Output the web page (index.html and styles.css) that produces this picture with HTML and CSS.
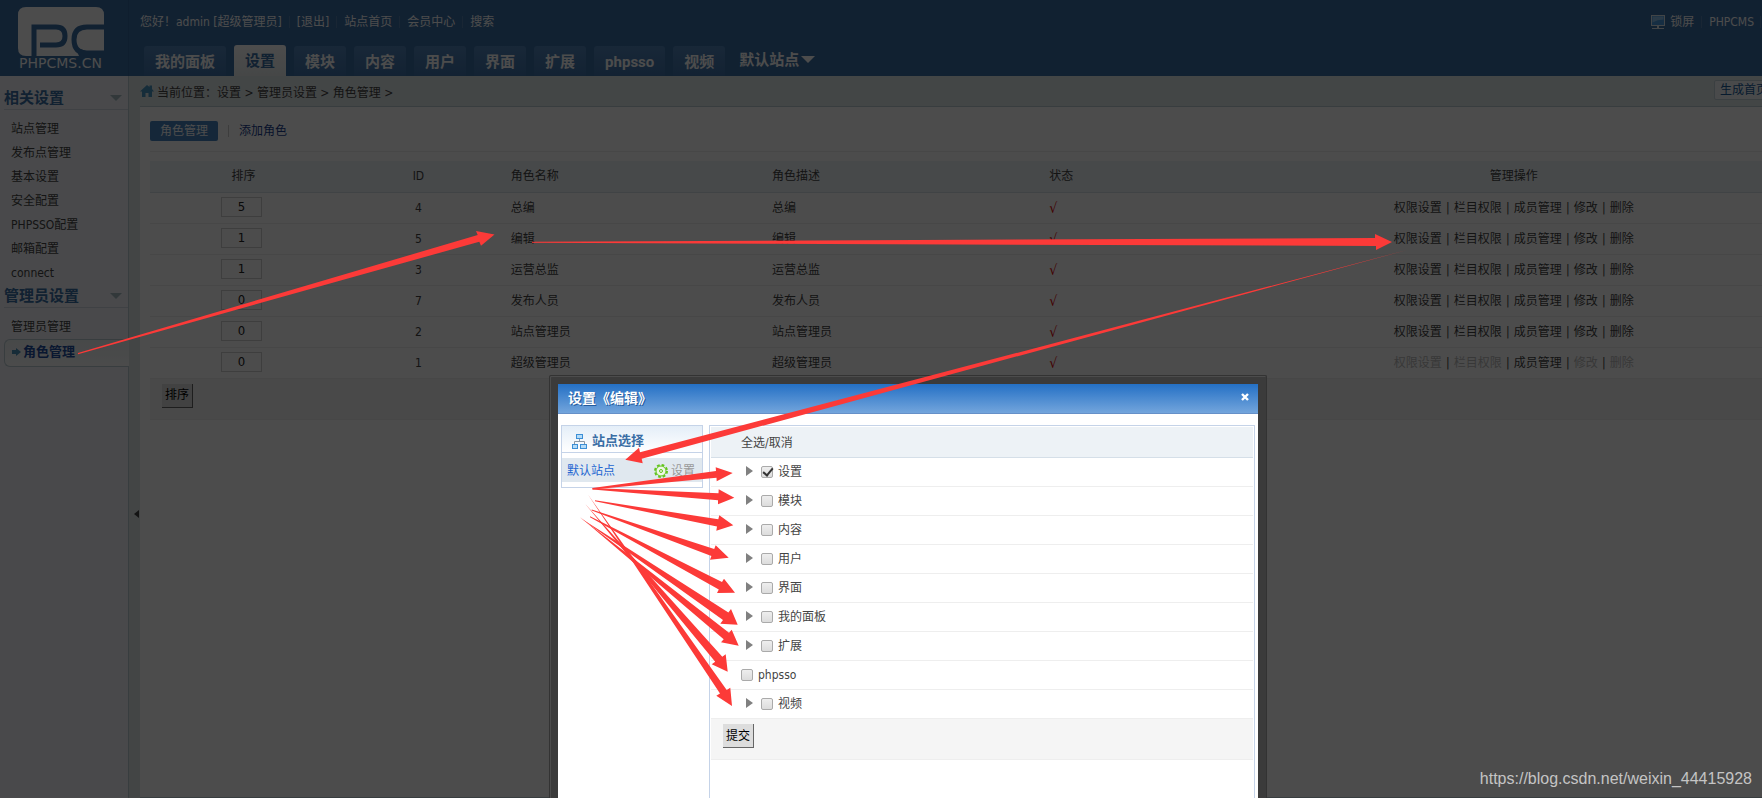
FILE: index.html
```html
<!DOCTYPE html>
<html lang="zh-CN">
<head>
<meta charset="utf-8">
<title>PHPCMS 角色管理</title>
<link rel="stylesheet" href="styles.css">
</head>
<body>
<div class="page">
  <header class="header">
    <a class="logo" href="#">
      <svg width="86" height="49" viewBox="0 0 86 49" aria-hidden="true">
        <path fill="#fff" d="M8 0H78Q86 0 86 8V49H8Q0 49 0 41V8Q0 0 8 0Z"/>
        <path fill="#3a6ea5" d="M57 40L61 49H86V44H68Z"/>
        <g fill="none" stroke="#3a6ea5" stroke-width="5">
          <path d="M16 49V20H38Q47 20 47 29Q47 38 38 38H22"/>
          <path d="M86 20H69Q56 20 56 32.500Q56 46 69 46H86"/>
        </g>
      </svg>
      <span class="logo-text">PHPCMS.CN</span>
    </a>
    <div class="header-main">
      <div class="topbar">
        <span>您好！admin [超级管理员]</span><i class="sep"></i>
        <a href="#">[退出]</a><i class="sep"></i>
        <a href="#">站点首页</a><i class="sep"></i>
        <a href="#">会员中心</a><i class="sep"></i>
        <a href="#">搜索</a>
        <a class="lock" href="#">
          <svg width="14" height="15" viewBox="0 0 14 15" aria-hidden="true"><rect x=".5" y=".5" width="13" height="10" fill="#4a9be0" stroke="#dde6ee"/><path d="M6 11h2v2h5v1H1v-1h5z" fill="#dde6ee"/><path d="M1.500 1.500h11v3q-6 0-11 3z" fill="#8cc2ee"/></svg>
          锁屏</a><i class="sep"></i>
        <a href="#">PHPCMS</a><i class="sep last"></i>
      </div>
      <nav class="tabs">
        <a href="#">我的面板</a><a class="active" href="#">设置</a><a href="#">模块</a><a href="#">内容</a><a href="#">用户</a><a href="#">界面</a><a href="#">扩展</a><a href="#">phpsso</a><a href="#">视频</a>
        <button class="site-switch" type="button">默认站点<i class="caret"></i></button>
      </nav>
    </div>
  </header>
  <div class="body">
    <aside class="sidebar">
      <h3>相关设置<i class="fold"></i></h3>
      <ul>
        <li><a href="#">站点管理</a></li>
        <li><a href="#">发布点管理</a></li>
        <li><a href="#">基本设置</a></li>
        <li><a href="#">安全配置</a></li>
        <li><a href="#">PHPSSO配置</a></li>
        <li><a href="#">邮箱配置</a></li>
        <li><a href="#">connect</a></li>
      </ul>
      <h3>管理员设置<i class="fold"></i></h3>
      <ul>
        <li><a href="#">管理员管理</a></li>
        <li class="current"><a href="#"><svg width="9" height="8" viewBox="0 0 9 8" aria-hidden="true"><path d="M0 2h4V0l5 4-5 4V6H0z" fill="#4f93bb"/></svg>角色管理</a></li>
      </ul>
    </aside>
    <div class="splitter"><i></i></div>
    <main class="content">
      <div class="crumbs">
        <svg width="14" height="12" viewBox="0 0 14 12" aria-hidden="true"><path d="M7 0l2.500 2V.5H12V4l2 2.500h-2V12H8.500V8h-3v4H2V6.500H0z" fill="#4a97c4"/></svg>
        <span class="path">当前位置：设置 &gt; 管理员设置 &gt; 角色管理 &gt;</span>
        <a class="make" href="#">生成首页</a>
      </div>
      <section class="panel">
        <div class="subnav">
          <a class="on" href="#">角色管理</a><i></i><a href="#">添加角色</a>
        </div>
        <table class="roles">
          <colgroup><col class="c-sort"><col class="c-id"><col class="c-name"><col class="c-desc"><col class="c-state"><col class="c-ops"></colgroup>
          <thead><tr><th>排序</th><th>ID</th><th class="l">角色名称</th><th class="l">角色描述</th><th class="l">状态</th><th>管理操作</th></tr></thead>
          <tbody>
            <tr><td class="sort"><input type="text" aria-label="总编排序" value="5"></td><td>4</td><td class="l">总编</td><td class="l">总编</td><td class="l ok">√</td><td><a href="#">权限设置</a><b>|</b><a href="#">栏目权限</a><b>|</b><a href="#">成员管理</a><b>|</b><a href="#">修改</a><b>|</b><a href="#">删除</a></td></tr>
            <tr><td class="sort"><input type="text" aria-label="编辑排序" value="1"></td><td>5</td><td class="l">编辑</td><td class="l">编辑</td><td class="l ok">√</td><td><a href="#">权限设置</a><b>|</b><a href="#">栏目权限</a><b>|</b><a href="#">成员管理</a><b>|</b><a href="#">修改</a><b>|</b><a href="#">删除</a></td></tr>
            <tr><td class="sort"><input type="text" aria-label="运营总监排序" value="1"></td><td>3</td><td class="l">运营总监</td><td class="l">运营总监</td><td class="l ok">√</td><td><a href="#">权限设置</a><b>|</b><a href="#">栏目权限</a><b>|</b><a href="#">成员管理</a><b>|</b><a href="#">修改</a><b>|</b><a href="#">删除</a></td></tr>
            <tr><td class="sort"><input type="text" aria-label="发布人员排序" value="0"></td><td>7</td><td class="l">发布人员</td><td class="l">发布人员</td><td class="l ok">√</td><td><a href="#">权限设置</a><b>|</b><a href="#">栏目权限</a><b>|</b><a href="#">成员管理</a><b>|</b><a href="#">修改</a><b>|</b><a href="#">删除</a></td></tr>
            <tr><td class="sort"><input type="text" aria-label="站点管理员排序" value="0"></td><td>2</td><td class="l">站点管理员</td><td class="l">站点管理员</td><td class="l ok">√</td><td><a href="#">权限设置</a><b>|</b><a href="#">栏目权限</a><b>|</b><a href="#">成员管理</a><b>|</b><a href="#">修改</a><b>|</b><a href="#">删除</a></td></tr>
            <tr><td class="sort"><input type="text" aria-label="超级管理员排序" value="0"></td><td>1</td><td class="l">超级管理员</td><td class="l">超级管理员</td><td class="l ok">√</td><td><span class="off">权限设置</span><b>|</b><span class="off">栏目权限</span><b>|</b><a href="#">成员管理</a><b>|</b><span class="off">修改</span><b>|</b><span class="off">删除</span></td></tr>
          </tbody>
        </table>
        <div class="btnbar"><button class="btn" type="button">排序</button></div>
      </section>
    </main>
  </div>

  <div class="mask"></div>

  <div class="dialog" role="dialog" aria-label="设置《编辑》">
    <div class="dialog-window">
      <div class="dialog-title"><h2>设置《编辑》</h2><button type="button" aria-label="关闭"><svg width="8" height="8" viewBox="0 0 8 8"><path d="M1 1l6 6M7 1L1 7" stroke="#fff" stroke-width="2.400"/></svg></button></div>
      <div class="dialog-body">
        <div class="sites">
          <h4>
            <svg width="15" height="15" viewBox="0 0 15 15" aria-hidden="true"><path d="M7.500 5v3M2.500 10V7.500h10V10" fill="none" stroke="#8b98a5"/><g fill="#b5dcf8" stroke="#3c8fd6"><rect x="4.500" y=".5" width="6" height="4"/><rect x=".5" y="10.500" width="5" height="4"/><rect x="8.500" y="10.500" width="6" height="4"/></g></svg>
            站点选择</h4>
          <div class="site">
            <a href="#">默认站点</a>
            <a class="set" href="#"><svg width="14" height="14" viewBox="0 0 14 14" aria-hidden="true"><circle cx="7" cy="7" r="6" fill="none" stroke="#62c41c" stroke-width="2" stroke-dasharray="2.700 2"/><circle cx="7" cy="7" r="5" fill="#eef7e6" stroke="#62c41c"/><circle cx="7" cy="7" r="1.500" fill="none" stroke="#62c41c"/></svg>设置</a>
          </div>
        </div>
        <form class="perms">
          <div class="perms-head">全选/取消</div>
          <div class="perm"><i></i><label><input type="checkbox" checked>设置</label></div>
          <div class="perm"><i></i><label><input type="checkbox">模块</label></div>
          <div class="perm"><i></i><label><input type="checkbox">内容</label></div>
          <div class="perm"><i></i><label><input type="checkbox">用户</label></div>
          <div class="perm"><i></i><label><input type="checkbox">界面</label></div>
          <div class="perm"><i></i><label><input type="checkbox">我的面板</label></div>
          <div class="perm"><i></i><label><input type="checkbox">扩展</label></div>
          <div class="perm leaf"><label><input type="checkbox">phpsso</label></div>
          <div class="perm"><i></i><label><input type="checkbox">视频</label></div>
          <div class="perms-foot"><button class="btn" type="button">提交</button></div>
        </form>
      </div>
    </div>
  </div>

  <svg class="arrows" width="1762" height="798" viewBox="0 0 1762 798" fill="#fc3a38" aria-hidden="true">
    <path d="M78 353L477.700 235L476 231L494.500 234.500L481 245.700L479.300 241.700L78 354.200Z"/>
    <path d="M532 241.800L1375 238V234L1392 242L1376 250V246L532 242.800Z"/>
    <path d="M1407 250L640 452.300L639 447.700L625.300 459.700L642.700 463.300L641.700 458.700Z"/>
    <path d="M592.500 488L716 471L715.700 467.300L732.700 473L716.700 481.300L716.500 477.700L592.500 489.500Z"/>
    <path d="M592.500 488L718.500 493.300L718.700 489.300L734.300 497.700L718 504.300V500.300L592.500 489.500Z"/>
    <path d="M595 500.300L718.300 519.300L719.300 515.300L733.300 525.300L716.300 530.700L717 526.500L595 501.300Z"/>
    <path d="M591.700 509.500L714.200 549L715.700 545.300L728.700 557.700L710 559.700L711.400 556L591.700 510.500Z"/>
    <path d="M590 516.200L722 582L724 578.700L735 592.700L717 593L718.800 589.400L590 517.200Z"/>
    <path d="M580 517.700L728.400 612.500L731 609L737.700 624.700L720.300 623.700L723 620Z"/>
    <path d="M580 517L729 632.700L731.700 629.700L738.700 645.700L721 642.300L723.700 639.200Z"/>
    <path d="M585.300 504L722.300 656.800L725.700 654.300L727.700 671.700L711.700 664.300L715.200 661.800Z"/>
    <path d="M588.300 495L726.700 690L730.300 687.700L732 706L716.300 695.700L720 693.600Z"/>
  </svg>
  <div class="watermark">https://blog.csdn.net/weixin_44415928</div>
</div>
</body>
</html>
```
FILE: styles.css
```css
* { box-sizing: border-box; }
body {
  margin: 0;
  font: 12px/24px "DejaVu Sans Condensed", "Noto Sans CJK SC", sans-serif;
  color: #444;
}
a { color: inherit; text-decoration: none; }
ul, h2, h3, h4 { margin: 0; padding: 0; list-style: none; }
button { font-family: inherit; cursor: pointer; }

.page {
  position: relative;
  display: flex;
  flex-direction: column;
  height: 100vh;
  overflow: hidden;
}

/* header */
.header { display: flex; flex: none; height: 76px; background: #3a6ea5; color: #fff; }
.logo {
  display: flex;
  flex-direction: column;
  align-items: center;
  width: 129px;
  padding: 7px 7px 0 0;
  border-right: 1px solid #34649a;
}
.logo svg { display: block; }
.logo-text { font: 14px/14px "DejaVu Sans", sans-serif; }
.header-main { display: flex; flex: 1; flex-direction: column; justify-content: space-between; }
.topbar { display: flex; align-items: center; height: 24px; margin: 10px 1px 0 11px; white-space: nowrap; }
.sep { width: 1px; height: 12px; margin: 0 7px; background: #5580af; }
.sep.last { margin: 0 0 0 6px; }
.lock { display: flex; align-items: center; gap: 5px; margin-left: auto; }
.tabs { display: flex; gap: 8px; align-items: flex-end; padding-left: 15px; }
.tabs a {
  height: 30px;
  padding: 0 11px;
  border-radius: 3px 3px 0 0;
  background: linear-gradient(#5285bb, #3f72a9);
  font: bold 15px/32px Roboto, "Noto Sans CJK SC", sans-serif;
}
.tabs .active { height: 31px; background: linear-gradient(#fff, #e9eeee); color: #3a6ea5; }
.site-switch {
  display: flex;
  align-items: center;
  gap: 2px;
  height: 34px;
  padding: 0 6px 2px;
  border: 0;
  background: none;
  color: #fff;
  font-size: 15px;
  font-weight: bold;
}
.caret { margin-top: 2px; border: 7px solid transparent; border-top-color: #fff; border-bottom: 0; }

/* sidebar */
.body { display: flex; flex: 1; min-height: 0; }
.sidebar { width: 129px; padding: 10px 0 0 4px; border-right: 1px solid #bccbd3; background: #f3f6fb; }
.sidebar h3 {
  display: flex;
  align-items: center;
  justify-content: space-between;
  height: 24px;
  padding-right: 6px;
  border-bottom: 1px solid #d3dbe5;
  color: #3a6ea5;
  font-size: 15px;
}
.fold { border: 6px solid transparent; border-top-color: #a9bdc4; border-bottom: 0; }
.sidebar ul { padding-top: 7px; }
.sidebar ul + h3 { height: 23px; }
.sidebar li { height: 24px; padding-left: 7px; }
.sidebar .current {
  height: 28px;
  margin-right: -1px;
  border: 1px solid #bccbd3;
  border-right: 0;
  border-radius: 6px 0 0 6px;
  background: linear-gradient(#eef3f5, #fbfcfc);
  color: #1f4fa0;
  font-size: 13px;
  font-weight: bold;
}
.current a { display: flex; align-items: center; gap: 2px; }
.splitter { display: flex; align-items: center; justify-content: center; width: 11px; background: #dfe6e7; }
.splitter i { border: 4px solid transparent; border-right: 5px solid #444; border-left: 0; margin: 154px 0 0 4px; }

/* content */
.content { display: flex; flex: 1; flex-direction: column; min-width: 0; background: #e2e9ea; overflow: hidden; }
.crumbs { display: flex; align-items: center; height: 30px; white-space: nowrap; }
.crumbs svg { flex: none; margin-right: 3px; }
.path { flex: 1; line-height: 30px; padding-top: 3px; }
.make {
  flex: none;
  height: 20px;
  margin: 0 -12px 2px 0;
  padding: 0 5px;
  border: 1px solid #c3d2da;
  border-radius: 2px;
  background: #f4f8fa;
  color: #1a5c9c;
  line-height: 18px;
}
.panel { flex: 1; margin-left: -1px; padding: 14px 0 0 10px; border: 1px solid #bccbd3; border-right: 0; background: #fff; }
.subnav { display: flex; align-items: center; height: 31px; padding-bottom: 11px; border-bottom: 1px solid #eee; color: #1b3f8f; line-height: 20px; }
.subnav .on { width: 68px; border-radius: 2px; background: #4684c0; color: #fff; text-align: center; }
.subnav i { width: 1px; height: 12px; margin: 0 10px; background: #ccc; }
.roles { width: 100%; margin-top: 9px; border-collapse: collapse; table-layout: fixed; }
.c-sort { width: 11.6%; }
.c-id { width: 10.1%; }
.c-name { width: 16.2%; }
.c-desc { width: 17.2%; }
.c-state { width: 14.1%; }
.roles th, .roles td { height: 31px; padding: 0; border-bottom: 1px solid #eee; font-weight: normal; text-align: center; line-height: 24px; white-space: nowrap; }
.roles th { background: #eef3f7; border-color: #d5dfe8; }
.roles .l { padding-left: 11px; text-align: left; }
.roles .ok { color: #d00; font-size: 14px; }
.roles .sort { padding: 0 4px 2px 0; }
.roles b { display: inline-block; width: 12px; font-weight: normal; text-align: center; }
.off { color: #bbb; }
.roles input {
  display: block;
  width: 41px;
  height: 20px;
  margin: 0 auto;
  padding: 0;
  border: 1px solid #d0d0d0;
  background: #fff;
  color: #222;
  font: 13px "DejaVu Sans Condensed", sans-serif;
  text-align: center;
}
.btnbar { height: 41px; padding: 5px 12px; border-bottom: 1px solid #eee; background: #f5f5f5; }
.btn {
  display: block;
  width: 31px;
  height: 24px;
  padding: 0;
  border: solid #666;
  border-width: 0 1px 1px 0;
  background: #ddd;
  color: #000;
  font-size: 12px;
  line-height: 22px;
}

.mask { position: absolute; inset: 0; background: rgba(0, 0, 0, .7); }

/* dialog */
.dialog {
  position: absolute;
  top: 375px;
  bottom: 0;
  left: calc(50% - 332px);
  width: 718px;
  padding: 8px 8px 0;
  border: 1px solid #333;
  border-bottom: 0;
  border-radius: 2px 2px 0 0;
  background: #3b3b3b;
  box-shadow: inset 1px 1px #4c4c4c;
}
.dialog-window { display: flex; flex-direction: column; height: 100%; background: #fff; }
.dialog-title {
  display: flex;
  justify-content: space-between;
  align-items: center;
  height: 30px;
  padding: 0 9px 0 10px;
  border-bottom: 1px solid #6690c8;
  background: linear-gradient(#2470c5, #73a5dc);
  color: #fff;
}
.dialog-title h2 { padding-bottom: 2px; font-size: 14px; text-shadow: 1px 1px #245a9c; }
.dialog-title button { display: flex; padding: 0 0 4px; border: 0; background: none; }
.dialog-body { display: flex; flex: 1; align-items: flex-start; gap: 6px; padding: 11px 3px 0; }
.sites { width: 142px; padding-bottom: 5px; border: 1px solid #c5d3e8; }
.sites h4 {
  display: flex;
  align-items: center;
  gap: 5px;
  height: 27px;
  margin-bottom: 5px;
  padding: 4px 0 0 10px;
  border-bottom: 1px solid #c5d3e8;
  background: linear-gradient(#e4eef8, #fff);
  color: #3a6ea5;
  font-size: 13px;
}
.site { display: flex; justify-content: space-between; height: 24px; padding: 1px 7px 0 5px; background: #e0e8ef; color: #2366d1; }
.set { display: flex; align-items: center; gap: 3px; color: #999; }
.perms { flex: 1; align-self: stretch; padding: 1px 1px 0; border: 1px solid #c5d3e8; border-bottom: 0; }
.perms-head { height: 31px; padding-left: 30px; border-bottom: 1px solid #d5dfe8; background: #edf2f6; line-height: 32px; }
.perm { display: flex; gap: 8px; height: 29px; padding-left: 35px; border-bottom: 1px solid #eee; line-height: 30px; }
.perm.leaf { padding-left: 30px; }
.perm > i { height: 10px; margin-top: 8px; border: 5px solid transparent; border-left: 7px solid #808080; border-right: 0; }
.perm label { display: flex; align-items: center; gap: 5px; }
.perm input {
  appearance: none;
  display: grid;
  width: 12px;
  height: 12px;
  margin: 0;
  border: 1px solid #aaa;
  border-radius: 2px;
  background: linear-gradient(#eee, #dcdcdc);
}
.perm input:checked::after {
  content: "";
  width: 4px;
  height: 8px;
  margin: -1px 0 0 3px;
  border: solid #333;
  border-width: 0 2px 2px 0;
  transform: rotate(40deg);
}
.perms-foot { height: 41px; padding: 5px 12px; border-bottom: 1px solid #eee; background: #f5f5f5; }

.arrows { position: absolute; top: 0; left: 0; pointer-events: none; }
.watermark {
  position: absolute;
  right: 10px;
  bottom: 8px;
  color: #c4c4c4;
  font: 16px/22px "Liberation Sans", Arial, sans-serif;
}
```
